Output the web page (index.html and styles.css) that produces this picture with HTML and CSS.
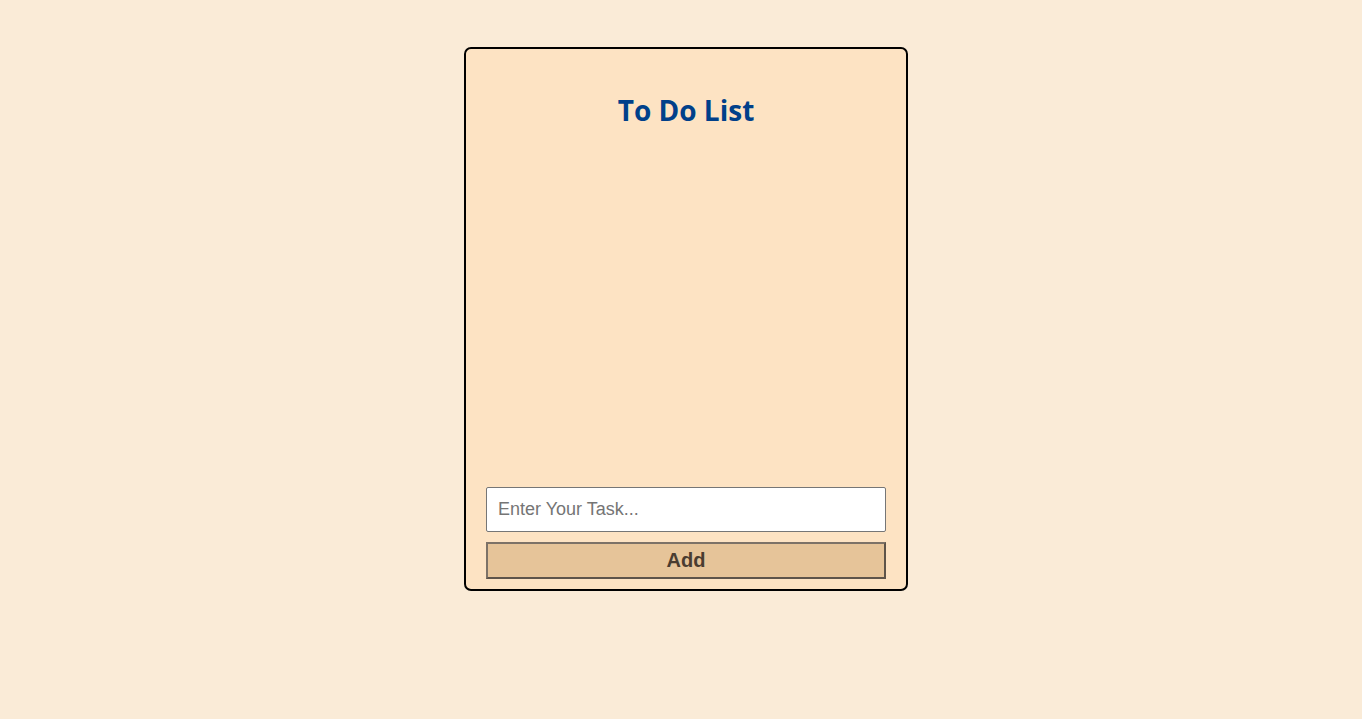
FILE: index.html
```html
<!DOCTYPE html>
<html>
<head>
<meta charset="utf-8">
<link rel="stylesheet" href="styles.css">
</head>
<body>
<div class="page">
  <div class="card">
    <h1 class="title">To Do List</h1>
    <ul class="tasks"></ul>
    <input class="task-input" type="text" placeholder="Enter Your Task...">
    <button class="add-btn">Add</button>
  </div>
</div>
</body>
</html>
```

FILE: styles.css
```css
html, body {
  margin: 0;
  padding: 0;
  background: #faebd7;
  height: 100%;
}
.page {
  display: flex;
  justify-content: center;
  padding-top: 47px;
  padding-left: 10px;
}
.card {
  box-sizing: border-box;
  width: 444px;
  height: 544px;
  background: #fde3c3;
  border: 2px solid #000;
  border-radius: 7px;
  padding: 0 20px 10px;
  display: flex;
  flex-direction: column;
}
.title {
  margin: 42px 0 2px;
  text-align: center;
  font-family: "Open Sans", sans-serif;
  font-weight: 700;
  font-size: 28px;
  line-height: 38px;
  color: #00408a;
}
.tasks {
  flex: 1;
  margin: 0;
  padding: 0;
  list-style: none;
}
.task-input {
  box-sizing: border-box;
  width: 100%;
  height: 45px;
  border: 1px solid #767676;
  border-radius: 2px;
  padding: 0 11px;
  font-family: "Liberation Sans", Arial, sans-serif;
  font-size: 18px;
  background: #fff;
  outline: none;
}
.task-input::placeholder {
  color: #757575;
}
.add-btn {
  box-sizing: border-box;
  width: 100%;
  height: 37px;
  margin-top: 10px;
  background: #e6c499;
  border: 2px solid #5e544a;
  border-top-color: #7d7267;
  border-left-color: #7d7267;
  font-family: "Liberation Sans", Arial, sans-serif;
  font-weight: 700;
  font-size: 20px;
  color: #4a3c30;
  padding: 0;
}
```
